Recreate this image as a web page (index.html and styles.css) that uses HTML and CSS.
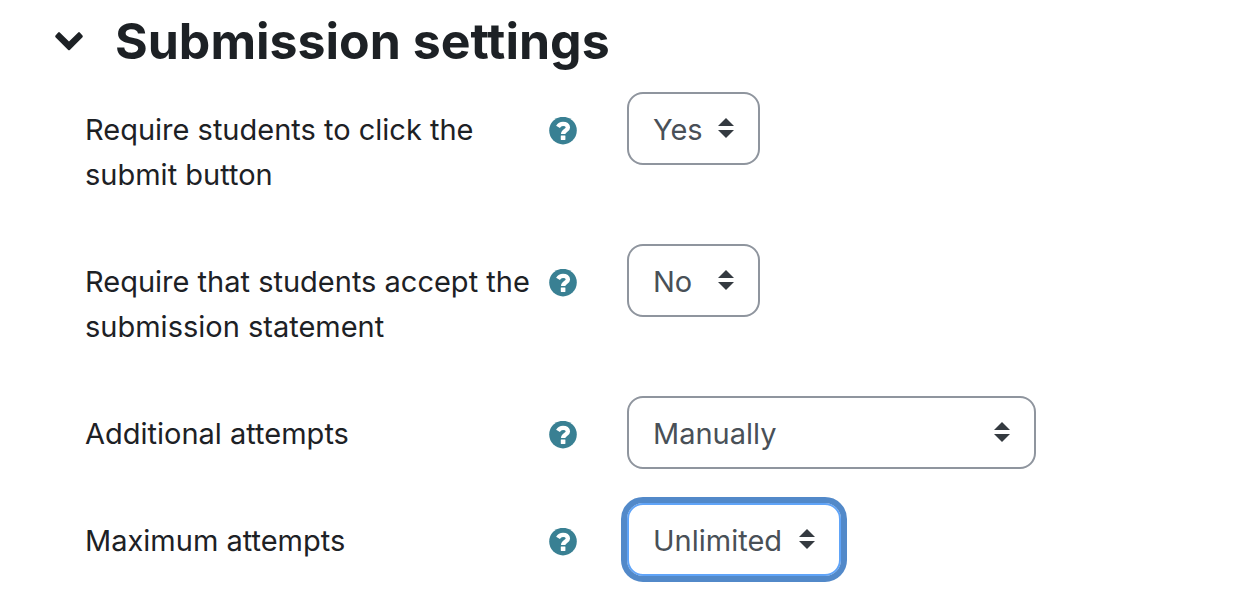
FILE: index.html
```html
<!DOCTYPE html>
<html lang="en">
<head>
    <meta charset="UTF-8">
    <meta name="viewport" content="width=device-width, initial-scale=1.0">
    <title>Submission settings</title>
    <link rel="stylesheet" href="styles.css">
</head>
<body>
    <svg class="sprite" aria-hidden="true">
        <symbol id="help" viewBox="0 0 28 28">
            <circle cx="14" cy="13.6" r="13.8" fill="#398093"/>
            <path fill="none" stroke="#fff" stroke-width="4.4" d="M9 9.8C10.2 7.8 11.8 6.9 14 6.9C16.900 6.9 18.900 8.300 18.900 10.500C18.900 13.700 14.200 13.400 14.200 17"/>
            <rect x="11.8" y="18.400" width="4.600" height="4.600" rx="0.4" fill="#fff"/>
        </symbol>
    </svg>

    <form>
        <fieldset class="section">
            <legend class="title">
                <button type="button" class="toggle" aria-label="Collapse">
                    <svg viewBox="0 0 30 20" width="30" height="22"><path d="M1.5 4.6L4.2 1.4Q5 0.7 5.8 1.4L15 10.6L24.2 1.4Q25 0.7 25.8 1.4L28.5 4.6Q29.2 5.4 28.500 6.2L15.8 19Q15 19.7 14.2 19L1.5 6.2Q0.8 5.4 1.5 4.6Z" fill="#1d2125"/></svg>
                </button>
                <span>Submission settings</span>
            </legend>

            <div class="row tall">
                <label for="submit">Require students to click the submit button</label>
                <button type="button" class="help" aria-label="Help"><svg><use href="#help"/></svg></button>
                <select id="submit" class="short"><option>Yes</option><option>No</option></select>
            </div>
            <div class="row tall">
                <label for="statement">Require that students accept the submission statement</label>
                <button type="button" class="help" aria-label="Help"><svg><use href="#help"/></svg></button>
                <select id="statement" class="short"><option>No</option><option>Yes</option></select>
            </div>
            <div class="row">
                <label for="reopen">Additional attempts</label>
                <button type="button" class="help" aria-label="Help"><svg><use href="#help"/></svg></button>
                <select id="reopen" class="long"><option>Manually</option></select>
            </div>
            <div class="row">
                <label for="attempts">Maximum attempts</label>
                <button type="button" class="help" aria-label="Help"><svg><use href="#help"/></svg></button>
                <select id="attempts" class="medium active"><option>Unlimited</option></select>
            </div>
        </fieldset>
    </form>
</body>
</html>
```
FILE: styles.css
```css
body {
    margin: 0;
    background-color: #fff;
    color: #1d2125;
    font-family: Inter, "Liberation Sans", sans-serif;
    font-size: 29px;
    line-height: 45px;
    font-variant-ligatures: none;
}
.sprite {
    display: block;
    width: 0;
    height: 0;
}
form {
    padding-top: 8px;
}
.section {
    margin: 0;
    padding: 0 40px 0 85px;
    border: 0;
}
.title {
    display: flex;
    align-items: center;
    gap: 31px;
    margin: 0 0 18px -31px;
    padding: 0;
    font-size: 50px;
    line-height: 66px;
    font-weight: 700;
}
.toggle,
.help {
    display: flex;
    padding: 0;
    border: 0;
    background: none;
}
.row {
    display: grid;
    grid-template-columns: 456px 28px 1fr;
    column-gap: 8px;
    align-items: start;
    margin-bottom: 34px;
}
.tall {
    min-height: 118px;
}
.row label {
    padding-top: 15px;
}
.help {
    margin-top: 25px;
}
.help svg {
    width: 28px;
    height: 28px;
    overflow: visible;
}
select {
    height: 73px;
    margin-left: 42px;
    padding: 2px 24px 0;
    border: 2px solid #8f959e;
    border-radius: 16px;
    appearance: none;
    /* up and down arrows */
    background: #fff url("data:image/svg+xml,%3Csvg xmlns='http://www.w3.org/2000/svg' viewBox='0 0 16 20'%3E%3Cpath fill='%23343a40' d='M8 0L0 8h16zM8 20l8-8H0z'/%3E%3C/svg%3E") no-repeat right 24px top 24px / 16px 20px;
    color: #495057;
    font: inherit;
}
.short {
    width: 133px;
}
.medium {
    width: 214px;
}
.long {
    width: 409px;
}
.active {
    border-color: #60a4f8;
    outline: 6px solid #5289c9;
}
```
